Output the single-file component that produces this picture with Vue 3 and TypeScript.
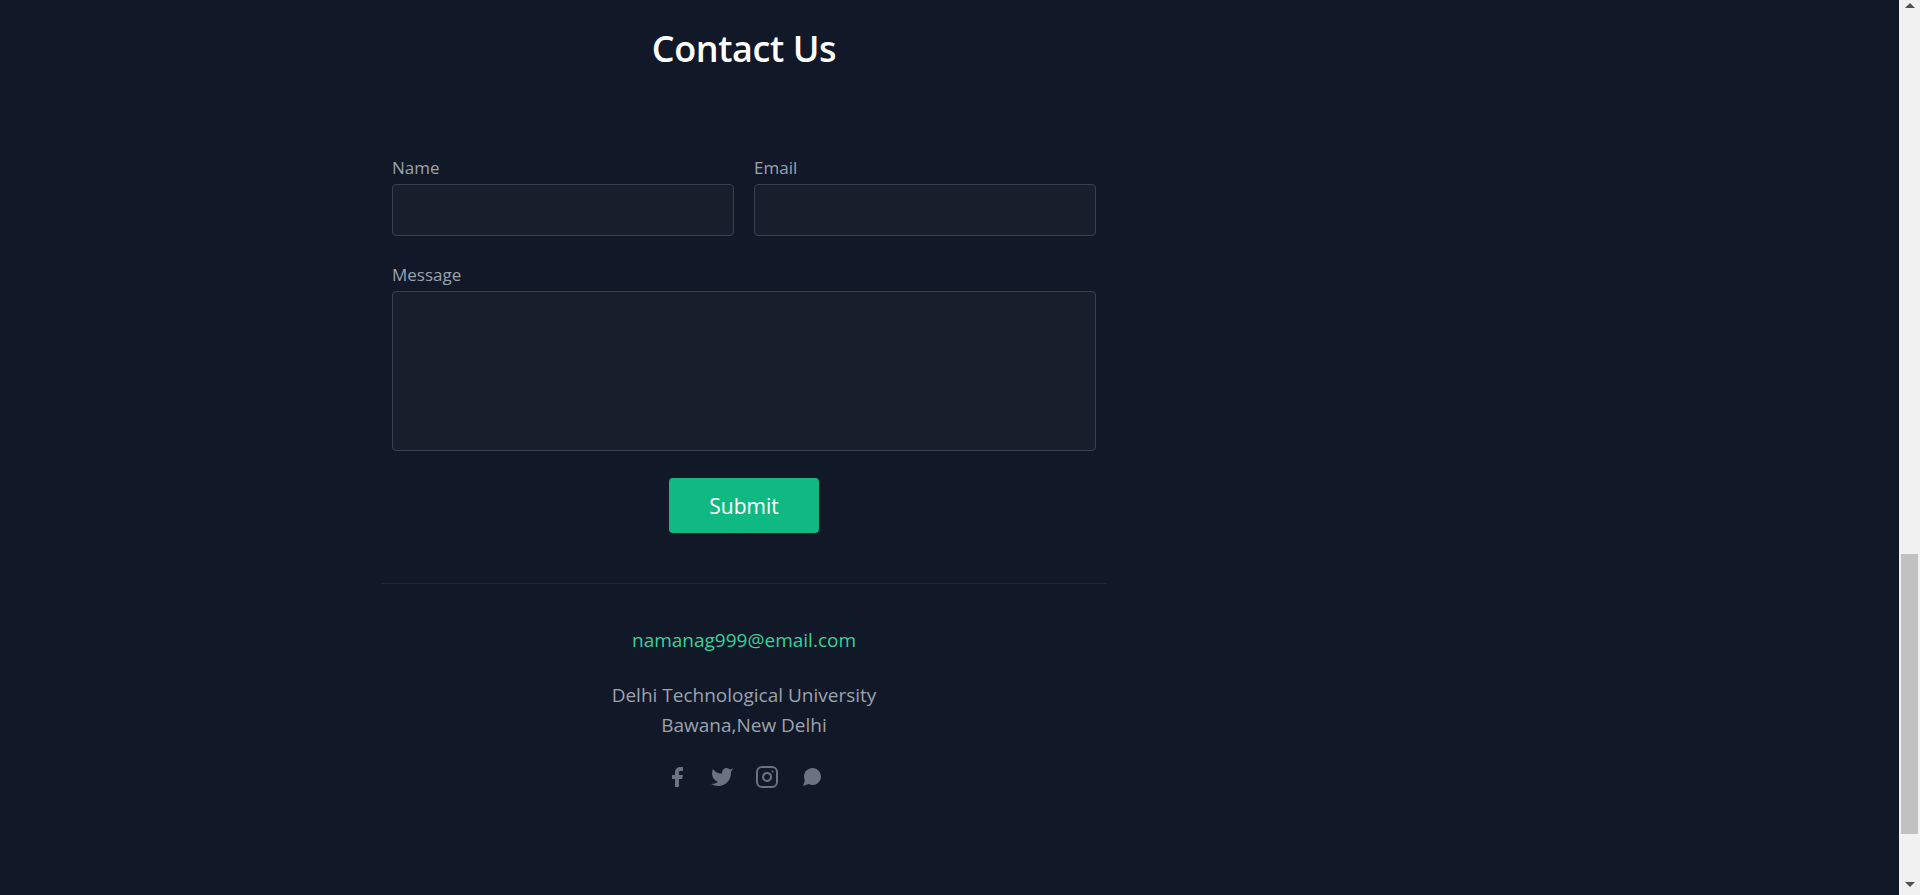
<script setup lang="ts">
const iconNote = 'footer social links'
</script>

<template>
  <div class="page">
    <main class="main">
      <section class="contact">
        <h1 class="title">Contact Us</h1>
        <form class="form" @submit.prevent>
          <div class="row">
            <div class="field">
              <label class="label" for="name">Name</label>
              <input id="name" class="control input" type="text" />
            </div>
            <div class="field">
              <label class="label" for="email">Email</label>
              <input id="email" class="control input" type="email" />
            </div>
          </div>
          <div class="field message">
            <label class="label" for="message">Message</label>
            <textarea id="message" class="control area"></textarea>
          </div>
          <button class="submit" type="submit">Submit</button>
        </form>
      </section>
      <footer class="foot" :aria-label="iconNote">
        <a class="mail">namanag999@email.com</a>
        <p class="addr">Delhi Technological University<br />Bawana,New Delhi</p>
        <div class="social">
          <svg class="icon" viewBox="0 0 24 24" fill="currentColor" stroke-linecap="round" stroke-linejoin="round" stroke-width="2"><path d="M18 2h-3a5 5 0 00-5 5v3H7v4h3v8h4v-8h3l1-4h-4V7a1 1 0 011-1h3z" /></svg>
          <svg class="icon" viewBox="0 0 24 24" fill="currentColor" stroke-linecap="round" stroke-linejoin="round" stroke-width="2"><path d="M23 3a10.9 10.9 0 01-3 1.53 4.48 4.48 0 00-7.86 3v1A10.66 10.66 0 013 4s-4 9 5 13a11.64 11.64 0 01-7 2c9 5 20 0 20-11.5a4.5 4.5 0 00-.08-.83A7.72 7.72 0 0023 3z" /></svg>
          <svg class="icon" viewBox="0 0 24 24" fill="none" stroke="currentColor" stroke-linecap="round" stroke-linejoin="round" stroke-width="2"><rect width="20" height="20" x="2" y="2" rx="5" ry="5" /><path d="M16 11.37A4 4 0 1112.63 8 4 4 0 0116 11.37zm1.5-4.87h.01" /></svg>
          <svg class="icon" viewBox="0 0 24 24" fill="currentColor" stroke-linecap="round" stroke-linejoin="round" stroke-width="2"><path d="M21 11.5a8.38 8.38 0 01-.9 3.8 8.5 8.5 0 01-7.6 4.7 8.38 8.38 0 01-3.8-.9L3 21l1.9-5.7a8.38 8.38 0 01-.9-3.8 8.5 8.5 0 014.7-7.6 8.38 8.38 0 013.8-.9h.5a8.48 8.48 0 018 8v.5z" /></svg>
        </div>
      </footer>
    </main>
    <aside class="scrollbar" aria-hidden="true">
      <div class="arrow up"></div>
      <div class="thumb"></div>
      <div class="arrow down"></div>
    </aside>
  </div>
</template>

<style>
html, body { margin: 0; overflow: hidden; }
</style>

<style scoped>
.page {
  display: flex;
  height: 895px;
  background: #111827;
  font-family: "Open Sans", "Noto Sans", sans-serif;
  color: #9ca3af;
  overflow: hidden;
}
.main { flex: 1; padding-left: 382px; min-width: 0; }
.contact { width: 704px; padding: 25px 10px 0; display: flex; flex-direction: column; }
.title {
  margin: 0;
  height: 48px;
  line-height: 48px;
  font-size: 36px;
  font-weight: 600;
  color: #fff;
  text-align: center;
  letter-spacing: -0.4px;
}
.form { display: flex; flex-direction: column; margin-top: 83px; }
.row { display: grid; grid-template-columns: 1fr 1fr; gap: 20px; }
.field { display: flex; flex-direction: column; }
.label { font-size: 17px; line-height: 24px; margin-bottom: 4px; }
.control {
  box-sizing: border-box;
  display: block;
  width: 100%;
  margin: 0;
  background: #171f2d;
  border: 1px solid #374151;
  border-radius: 4px;
  outline: none;
  color: #f3f4f6;
}
.input { height: 52px; }
.message { margin-top: 27px; }
.area { height: 160px; resize: none; }
.submit {
  align-self: center;
  width: 150px;
  height: 55px;
  margin-top: 27px;
  border: 0;
  border-radius: 4px;
  background: #10b981;
  color: #fff;
  font: 400 21px "Open Sans", sans-serif;
}
.foot {
  width: 724px;
  margin-top: 50px;
  padding-top: 41px;
  border-top: 1px solid #1f2937;
  display: flex;
  flex-direction: column;
  align-items: center;
  font-size: 19px;
  line-height: 30px;
}
.mail { color: #34d399; }
.addr { margin: 25px 0 0; text-align: center; }
.social { display: flex; gap: 21px; margin-top: 25px; color: #6b7280; }
.icon { display: block; width: 24px; height: 24px; }
.scrollbar {
  flex: none;
  width: 21px;
  box-sizing: border-box;
  background: #f1f1f1;
  padding: 3px 2px 0;
  display: flex;
  flex-direction: column;
  align-items: center;
}
.thumb { width: 17px; height: 280px; margin-top: 546px; background: #c1c1c1; }
.arrow {
  width: 0;
  height: 0;
  border-left: 5px solid transparent;
  border-right: 5px solid transparent;
}
.arrow.up { border-bottom: 5px solid #505050; }
.arrow.down { margin-top: 48px; border-top: 5px solid #505050; }
</style>
